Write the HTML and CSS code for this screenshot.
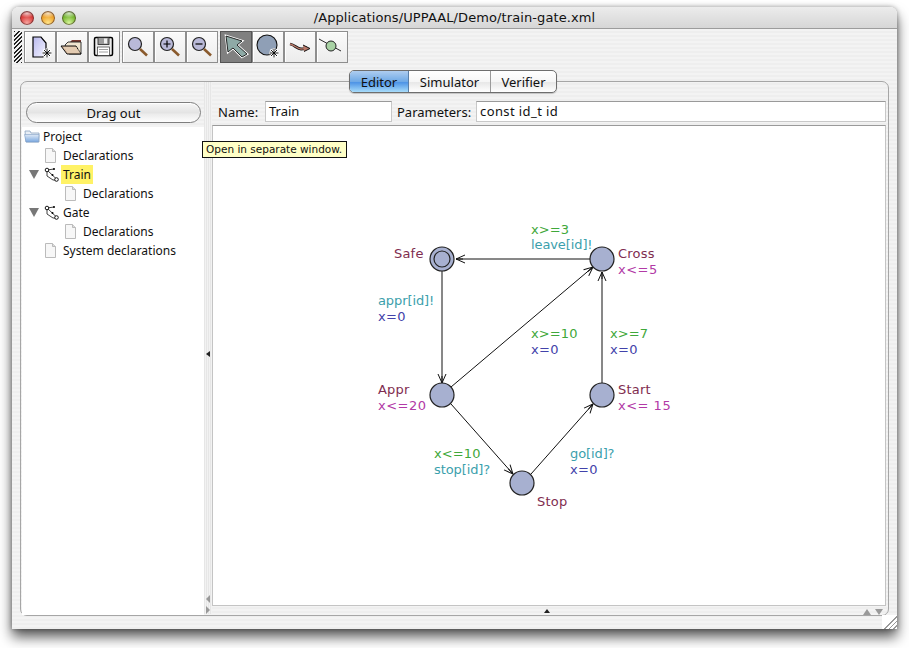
FILE: index.html
```html
<!DOCTYPE html>
<html lang="en">
<head>
  <meta charset="UTF-8">
  <title>/Applications/UPPAAL/Demo/train-gate.xml</title>
  <link rel="stylesheet" href="styles.css">
</head>
<body>
  <div class="window">
    <div class="titlebar">
      <div class="lights">
        <span class="light red"></span>
        <span class="light yellow"></span>
        <span class="light green"></span>
      </div>
      <div class="title">/Applications/UPPAAL/Demo/train-gate.xml</div>
    </div>

    <div class="toolbar">
      <div class="gripper"></div>
      <div class="toolgroup">
        <button class="tool"><svg width="30" height="30" viewBox="0 0 30 30"><defs><linearGradient id="pagefill" x1="0" y1="0" x2="1" y2="1"><stop offset="0" stop-color="#b9b9ee"/><stop offset="1" stop-color="#f4f4ff"/></linearGradient></defs><path d="M8 5h8l5 6v9l-3 5H8z" fill="url(#pagefill)" stroke="#000" stroke-width="1.200"/><path d="M22 16v10M17 21h10M18.500 17.500l7 7M25.500 17.500l-7 7" stroke="#fff" stroke-width="2.400"/><path d="M22 16.500v9M17.500 21h9M19 18l6 6M25 18l-6 6" stroke="#000" stroke-width=".9"/></svg></button>
        <button class="tool"><svg width="30" height="30" viewBox="0 0 30 30"><path d="M13 10l2-2h9v2z" fill="#7a3b34"/><path d="M8 13l3-3h13v12H12z" fill="#efe4cf" stroke="#222" stroke-width=".9"/><path d="M4 14h15l5 8H10z" fill="#d9b99a" stroke="#111"/><path d="M7 16h13M9 18h13M10 20h13" stroke="#f2e6d6" stroke-width=".8"/></svg></button>
        <button class="tool"><svg width="30" height="30" viewBox="0 0 30 30"><rect x="5.500" y="5.500" width="18" height="18" rx="1.500" fill="#ececec" stroke="#000" stroke-width="1.500"/><rect x="9" y="5.500" width="11" height="7" fill="#9b9b9b" stroke="#222" stroke-width=".8"/><rect x="15" y="6.500" width="3" height="5" fill="#eee"/><rect x="8.500" y="15" width="12" height="8.500" fill="#fff" stroke="#333" stroke-width=".7"/><path d="M10 17.500h9M10 20h9" stroke="#777" stroke-width=".7"/></svg></button>
      </div>
      <div class="toolgroup">
        <button class="tool"><svg width="30" height="30" viewBox="0 0 30 30"><circle cx="12" cy="12" r="6.500" fill="#b9b9d8" stroke="#222" stroke-width="1.200"/><path d="M17 17l7 6.500" stroke="#8a5a2c" stroke-width="2.600"/></svg></button>
        <button class="tool"><svg width="30" height="30" viewBox="0 0 30 30"><circle cx="12" cy="12" r="6.500" fill="#b9b9d8" stroke="#222" stroke-width="1.200"/><path d="M8.500 12h7M12 8.500v7" stroke="#000" stroke-width="1.200"/><path d="M17 17l7 6.500" stroke="#8a5a2c" stroke-width="2.600"/></svg></button>
        <button class="tool"><svg width="30" height="30" viewBox="0 0 30 30"><circle cx="12" cy="12" r="6.500" fill="#b9b9d8" stroke="#222" stroke-width="1.200"/><path d="M8.500 12h7" stroke="#000" stroke-width="1.200"/><path d="M17 17l7 6.500" stroke="#8a5a2c" stroke-width="2.600"/></svg></button>
      </div>
      <div class="toolgroup">
        <button class="tool pressed"><svg width="30" height="30" viewBox="0 0 30 30"><path d="M5 4l16 5-5 4 10 9-5 3-9-9-5 4z" fill="#8eaaa6" stroke="#fff" stroke-width="2.400"/><path d="M5 4l16 5-5 4 10 9-5 3-9-9-5 4z" fill="#8eaaa6" stroke="#111" stroke-width=".9"/></svg></button>
        <button class="tool"><svg width="30" height="30" viewBox="0 0 30 30"><circle cx="14" cy="13" r="10" fill="#8f9fb6" stroke="#111" stroke-width="1.100"/><path d="M21 16v10M16 21h10M17.500 17.500l7 7M24.500 17.500l-7 7" stroke="#fff" stroke-width="2.400"/><path d="M21 16.500v9M16.500 21h9M18 18l6 6M24 18l-6 6" stroke="#000" stroke-width=".9"/></svg></button>
        <button class="tool"><svg width="30" height="30" viewBox="0 0 30 30"><path d="M5 12c5 1 7 5 11 5s4-1 6-1" fill="none" stroke="#111" stroke-width="2.800"/><path d="M5 12c5 1 7 5 11 5s4-1 6-1" fill="none" stroke="#b87868" stroke-width="1.400"/><path d="M18 13l7 3.500-6 3" fill="#b87868" stroke="#111"/></svg></button>
        <button class="tool"><svg width="30" height="30" viewBox="0 0 30 30"><path d="M2 7l22 12" stroke="#111" stroke-width=".9"/><circle cx="14" cy="14" r="5" fill="#a8d2a4" stroke="#222"/></svg></button>
      </div>
    </div>

    <div class="tabs">
      <div class="tab active tab-editor">Editor</div>
      <div class="tab tab-sim">Simulator</div>
      <div class="tab tab-ver">Verifier</div>
    </div>

    <div class="pane">
      <div class="leftcol">
        <button class="dragout">Drag out</button>
        <div class="tree">
          <div class="node">
            <svg class="ic" width="17" height="15" viewBox="0 0 17 15"><defs><linearGradient id="folderfill" x1="0" y1="0" x2="0" y2="1"><stop offset="0" stop-color="#dfe9f5"/><stop offset="1" stop-color="#7aa8e0"/></linearGradient></defs><path d="M2 2h5l1 2h8v9H3z" fill="#e8eef6" stroke="#8aa2bf" stroke-width=".8"/><path d="M1.500 5.500h14.500l-.5 7.500H3z" fill="url(#folderfill)" stroke="#7f9dc4" stroke-width=".6"/></svg>
            <span>Project</span>
          </div>
          <div class="node lvl1">
            <svg class="ic" width="13" height="15" viewBox="0 0 13 15"><path d="M1.500.500h7l3 3v11h-10z" fill="#f7f7f7" stroke="#bbb"/><path d="M8.500.500v3h3" fill="#ddd" stroke="#bbb"/></svg>
            <span>Declarations</span>
          </div>
          <div class="node lvl1 parent">
            <span class="caret"></span>
            <svg class="ic" width="15" height="15" viewBox="0 0 15 15"><path d="M3 3l10 9.500M3 3l7-1M3 3v6l6 4h4" fill="none" stroke="#111" stroke-width=".8"/><circle cx="3" cy="3" r="1.800" fill="#fff" stroke="#000" stroke-width=".9"/><circle cx="12.500" cy="12.500" r="1.800" fill="#fff" stroke="#000" stroke-width=".9"/><circle cx="10" cy="2" r="1" fill="#000"/><circle cx="8.500" cy="8" r="1" fill="#000"/></svg>
            <span class="sel">Train</span>
          </div>
          <div class="node lvl2">
            <svg class="ic" width="13" height="15" viewBox="0 0 13 15"><path d="M1.500.500h7l3 3v11h-10z" fill="#f7f7f7" stroke="#bbb"/><path d="M8.500.500v3h3" fill="#ddd" stroke="#bbb"/></svg>
            <span>Declarations</span>
          </div>
          <div class="node lvl1 parent">
            <span class="caret"></span>
            <svg class="ic" width="15" height="15" viewBox="0 0 15 15"><path d="M3 3l10 9.500M3 3l7-1M3 3v6l6 4h4" fill="none" stroke="#111" stroke-width=".8"/><circle cx="3" cy="3" r="1.800" fill="#fff" stroke="#000" stroke-width=".9"/><circle cx="12.500" cy="12.500" r="1.800" fill="#fff" stroke="#000" stroke-width=".9"/><circle cx="10" cy="2" r="1" fill="#000"/><circle cx="8.500" cy="8" r="1" fill="#000"/></svg>
            <span>Gate</span>
          </div>
          <div class="node lvl2">
            <svg class="ic" width="13" height="15" viewBox="0 0 13 15"><path d="M1.500.500h7l3 3v11h-10z" fill="#f7f7f7" stroke="#bbb"/><path d="M8.500.500v3h3" fill="#ddd" stroke="#bbb"/></svg>
            <span>Declarations</span>
          </div>
          <div class="node lvl1">
            <svg class="ic" width="13" height="15" viewBox="0 0 13 15"><path d="M1.500.500h7l3 3v11h-10z" fill="#f7f7f7" stroke="#bbb"/><path d="M8.500.500v3h3" fill="#ddd" stroke="#bbb"/></svg>
            <span>System declarations</span>
          </div>
        </div>
      </div>

      <div class="vsplit">
        <span class="arrow-mid"></span>
        <span class="arrow-l"></span>
        <span class="arrow-r"></span>
      </div>

      <div class="rightcol">
        <div class="fields">
          <label class="name-label">Name:</label>
          <div class="field name-field">Train</div>
          <label class="param-label">Parameters:</label>
          <div class="field param-field">const id_t id</div>
        </div>
        <div class="canvas">
          <svg class="graph" width="672" height="479" viewBox="213 126 672 479">
            <defs>
              <marker id="arr" markerWidth="11" markerHeight="10" refX="10" refY="5" orient="auto" markerUnits="userSpaceOnUse">
                <path d="M1 1l9 4-9 4M10 5H3" fill="none" stroke="#111" stroke-width="1"/>
              </marker>
            </defs>
            <g class="edges">
              <path d="M590 259H456" marker-end="url(#arr)"/>
              <path d="M442 271V383" marker-end="url(#arr)"/>
              <path d="M451 387L593 267" marker-end="url(#arr)"/>
              <path d="M602 383V272" marker-end="url(#arr)"/>
              <path d="M451 404L513 474" marker-end="url(#arr)"/>
              <path d="M531 474L593 404" marker-end="url(#arr)"/>
            </g>
            <g class="locs">
              <circle cx="442" cy="259" r="12"/>
              <circle class="inner" cx="442" cy="259" r="8"/>
              <circle cx="602" cy="259" r="12"/>
              <circle cx="442" cy="395" r="12"/>
              <circle cx="602" cy="395" r="12"/>
              <circle cx="522" cy="483" r="12"/>
            </g>
            <text class="lname" x="394" y="258">Safe</text>
            <text class="lname" x="618" y="258">Cross</text>
            <text class="inv" x="618" y="274">x&lt;=5</text>
            <text class="lname" x="378" y="394">Appr</text>
            <text class="inv" x="378" y="410">x&lt;=20</text>
            <text class="lname" x="618" y="394">Start</text>
            <text class="inv" x="618" y="410">x&lt;= 15</text>
            <text class="lname" x="537" y="506">Stop</text>
            <text class="guard" x="531" y="234">x&gt;=3</text>
            <text class="sync" x="531" y="249">leave[id]!</text>
            <text class="sync" x="378" y="305">appr[id]!</text>
            <text class="assign" x="378" y="321">x=0</text>
            <text class="guard" x="531" y="338">x&gt;=10</text>
            <text class="assign" x="531" y="354">x=0</text>
            <text class="guard" x="610" y="338">x&gt;=7</text>
            <text class="assign" x="610" y="354">x=0</text>
            <text class="guard" x="434" y="458">x&lt;=10</text>
            <text class="sync" x="434" y="474">stop[id]?</text>
            <text class="sync" x="570" y="458">go[id]?</text>
            <text class="assign" x="570" y="474">x=0</text>
          </svg>
        </div>
        <div class="hsplit">
          <span class="up-mid"></span>
          <span class="up"></span>
          <span class="down"></span>
        </div>
      </div>

      <div class="tooltip">Open in separate window.</div>
    </div>

    <div class="statusbar">
      <div class="grip"></div>
    </div>
  </div>
</body>
</html>
```

FILE: styles.css
```css
html, body {
  margin: 0;
  padding: 0;
  background: #fff;
}

body {
  font-family: "Noto Sans", sans-serif;
  font-size: 13px;
  color: #111;
  width: 909px;
  height: 648px;
  overflow: hidden;
}

.window {
  width: 885px;
  height: 622px;
  margin: 7px 0 0 12px;
  display: flex;
  flex-direction: column;
  border-radius: 7px 7px 0 0;
  position: relative;
  background: repeating-linear-gradient(#eeeeee 0 2px, #f3f3f3 2px 4px);
  box-shadow: 0 8px 13px rgba(0,0,0,0.65), 0 0 5px rgba(0,0,0,0.35);
}

.titlebar {
  height: 21px;
  display: flex;
  align-items: center;
  position: relative;
  border-bottom: 1px solid #9c9c9c;
  border-radius: 7px 7px 0 0;
  background: linear-gradient(#ececec, #d6d6d6);
}

.lights {
  display: flex;
  gap: 7px;
  margin-left: 8px;
}

.light {
  width: 14px;
  height: 14px;
  border-radius: 50%;
  box-shadow: inset 0 0 0 1px rgba(60,30,30,0.55);
}

.red { background: radial-gradient(ellipse 60% 30% at 50% 18%, rgba(255,255,255,.7), transparent), radial-gradient(circle at 50% 85%, #f6a5a0, #d83a38 55%, #8e1d20); }
.yellow { background: radial-gradient(ellipse 60% 30% at 50% 18%, rgba(255,255,255,.7), transparent), radial-gradient(circle at 50% 85%, #ffe58a, #eda12a 55%, #a86712); }
.green { background: radial-gradient(ellipse 60% 30% at 50% 18%, rgba(255,255,255,.7), transparent), radial-gradient(circle at 50% 85%, #d8f59a, #73b52e 55%, #3e7a16); }

.title {
  flex: 1;
  text-align: center;
  font-family: "DejaVu Sans", sans-serif;
  font-size: 13px;
  letter-spacing: 0.100px;
  margin-left: -64px;
  color: #111;
}

.toolbar {
  height: 33px;
  padding: 2px 0 0 2px;
  display: flex;
}

.gripper {
  width: 8px;
  height: 32px;
  margin-right: 2px;
  background: repeating-linear-gradient(135deg, #222 0 1.400px, #f0f0f0 1.400px 3px);
}

.toolgroup {
  display: flex;
  margin-right: 2px;
}

.tool {
  width: 32px;
  height: 32px;
  margin: 0;
  padding: 0;
  display: flex;
  align-items: center;
  justify-content: center;
  border: 1px solid #8e8e8e;
  background: linear-gradient(#fafafa, #ececec);
  box-shadow: inset 1px 1px 0 #fff;
}

.tool.pressed {
  background: #808080;
  border: 1px solid #555;
  box-shadow: none;
}

.tabs {
  display: flex;
  align-self: center;
  height: 21px;
  margin: 6px 3px -12px 0;
  border: 1px solid #6e6e6e;
  border-radius: 5px;
  position: relative;
  z-index: 2;
  overflow: hidden;
  box-shadow: 0 1px 1px rgba(0,0,0,0.2);
  background: linear-gradient(#fff, #f6f6f6 50%, #e8e8e8 55%, #fff);
}

.tab {
  display: flex;
  align-items: center;
  justify-content: center;
  border-right: 1px solid #9a9a9a;
}

.tab-editor { width: 58px; }
.tab-sim { width: 81px; }
.tab-ver { width: 65px; border-right: 0; }

.tab.active {
  border-right-color: #5a7fa8;
  background: linear-gradient(#aecdf0, #6fa9e6 50%, #4e94e6 55%, #a8dcfa);
}

.pane {
  flex: 0 0 auto;
  height: 535px;
  margin: 0 8px;
  box-sizing: border-box;
  padding: 0 1px 1px;
  border: 1px solid #a6a6a6;
  border-radius: 7px;
  display: flex;
  position: relative;
}

.leftcol {
  width: 182px;
  padding-top: 20px;
}

.dragout {
  display: block;
  width: 175px;
  height: 21px;
  margin: 0 0 4px 4px;
  padding: 0;
  font-family: inherit;
  font-size: inherit;
  color: #111;
  border: 1px solid #7e7e7e;
  border-radius: 11px;
  background: linear-gradient(#f6f6f6, #e4e4e4 50%, #ececec 60%, #fdfdfd);
  box-shadow: inset 0 1px 1px #fff;
}

.tree {
  background: #fff;
  height: 488px;
  font-size: 12px;
}

.node {
  height: 19px;
  display: flex;
  align-items: center;
  white-space: nowrap;
  padding-left: 1px;
}

.node .ic {
  flex: none;
  margin-right: 3px;
}

.node.lvl1 { padding-left: 22px; }
.node.lvl2 { padding-left: 42px; }
.node.lvl1 .ic, .node.lvl2 .ic { margin-right: 6px; }
.node.parent { padding-left: 7px; }
.node.parent .ic { margin-right: 4px; }

.caret {
  width: 0;
  height: 0;
  margin-right: 5px;
  border-left: 5px solid transparent;
  border-right: 5px solid transparent;
  border-top: 9px solid #777;
}

.sel {
  background: #fff266;
  padding: 1px 2px;
  margin-left: -2px;
}

.vsplit {
  width: 8px;
  position: relative;
  background: repeating-linear-gradient(90deg, #e6e6e6 0 1px, #f2f2f2 1px 2px);
}

.arrow-mid {
  position: absolute;
  left: 2px;
  top: 269px;
  border-right: 4px solid #222;
  border-top: 3px solid transparent;
  border-bottom: 3px solid transparent;
}

.arrow-l, .arrow-r {
  position: absolute;
  left: 2px;
  border-top: 4px solid transparent;
  border-bottom: 4px solid transparent;
}

.arrow-l {
  top: 513px;
  border-right: 4px solid #999;
}

.arrow-r {
  top: 524px;
  border-left: 4px solid #999;
}

.rightcol {
  flex: 1;
  display: flex;
  flex-direction: column;
  min-width: 0;
}

.fields {
  display: flex;
  align-items: center;
  height: 21px;
  margin-top: 19px;
}

.name-label { margin-left: 6px; width: 47px; }
.param-label { margin-left: 5px; width: 79px; }

.field {
  box-sizing: border-box;
  height: 21px;
  padding: 0 3px;
  line-height: 19px;
  background: #fff;
  border: 1px solid #c8c8c8;
  border-top-color: #9a9a9a;
}

.name-field { width: 127px; }
.param-field { width: 410px; letter-spacing: 0.400px; }

.canvas {
  box-sizing: border-box;
  height: 481px;
  width: 674px;
  margin-top: 3px;
  background: #fff;
  border: 1px solid #c4c4c4;
  border-top-color: #9a9a9a;
}

.graph {
  display: block;
}

.edges path {
  fill: none;
  stroke: #111;
  stroke-width: 1;
}

.locs circle {
  fill: #a7b0d0;
  stroke: #222;
  stroke-width: 1.200;
}

.locs .inner {
  fill: none;
}

.graph text {
  font-family: "DejaVu Sans", sans-serif;
  font-size: 13px;
}

.lname { fill: #7f2d50; letter-spacing: 0.200px; }
.inv { fill: #b23aa6; letter-spacing: 0.500px; }
.guard { fill: #3fa83a; letter-spacing: 0.100px; }
.sync { fill: #3ba0ac; letter-spacing: -0.100px; }
.assign { fill: #4242aa; letter-spacing: 0.300px; }

.hsplit {
  height: 10px;
  position: relative;
}

.up-mid {
  position: absolute;
  left: 332px;
  top: 3px;
  border-bottom: 4px solid #222;
  border-left: 3px solid transparent;
  border-right: 3px solid transparent;
}

.up, .down {
  position: absolute;
  top: 3px;
  border-left: 4px solid transparent;
  border-right: 4px solid transparent;
}

.up {
  left: 651px;
  border-bottom: 6px solid #999;
}

.down {
  left: 663px;
  border-top: 6px solid #999;
}

.tooltip {
  position: absolute;
  left: 181px;
  top: 59px;
  box-sizing: border-box;
  width: 145px;
  height: 17px;
  line-height: 15px;
  padding-left: 3px;
  font-family: "DejaVu Sans", sans-serif;
  font-size: 10.500px;
  white-space: nowrap;
  background: #ffffc6;
  border: 1px solid #111;
}

.statusbar {
  flex: 1;
  position: relative;
}

.grip {
  position: absolute;
  right: 0;
  bottom: 0;
  width: 15px;
  height: 14px;
  background: linear-gradient(135deg, #fff 0 55%, #999 55% 60%, #fff 60% 70%, #999 70% 75%, #fff 75% 85%, #999 85% 90%, #fff 90%);
}
```
